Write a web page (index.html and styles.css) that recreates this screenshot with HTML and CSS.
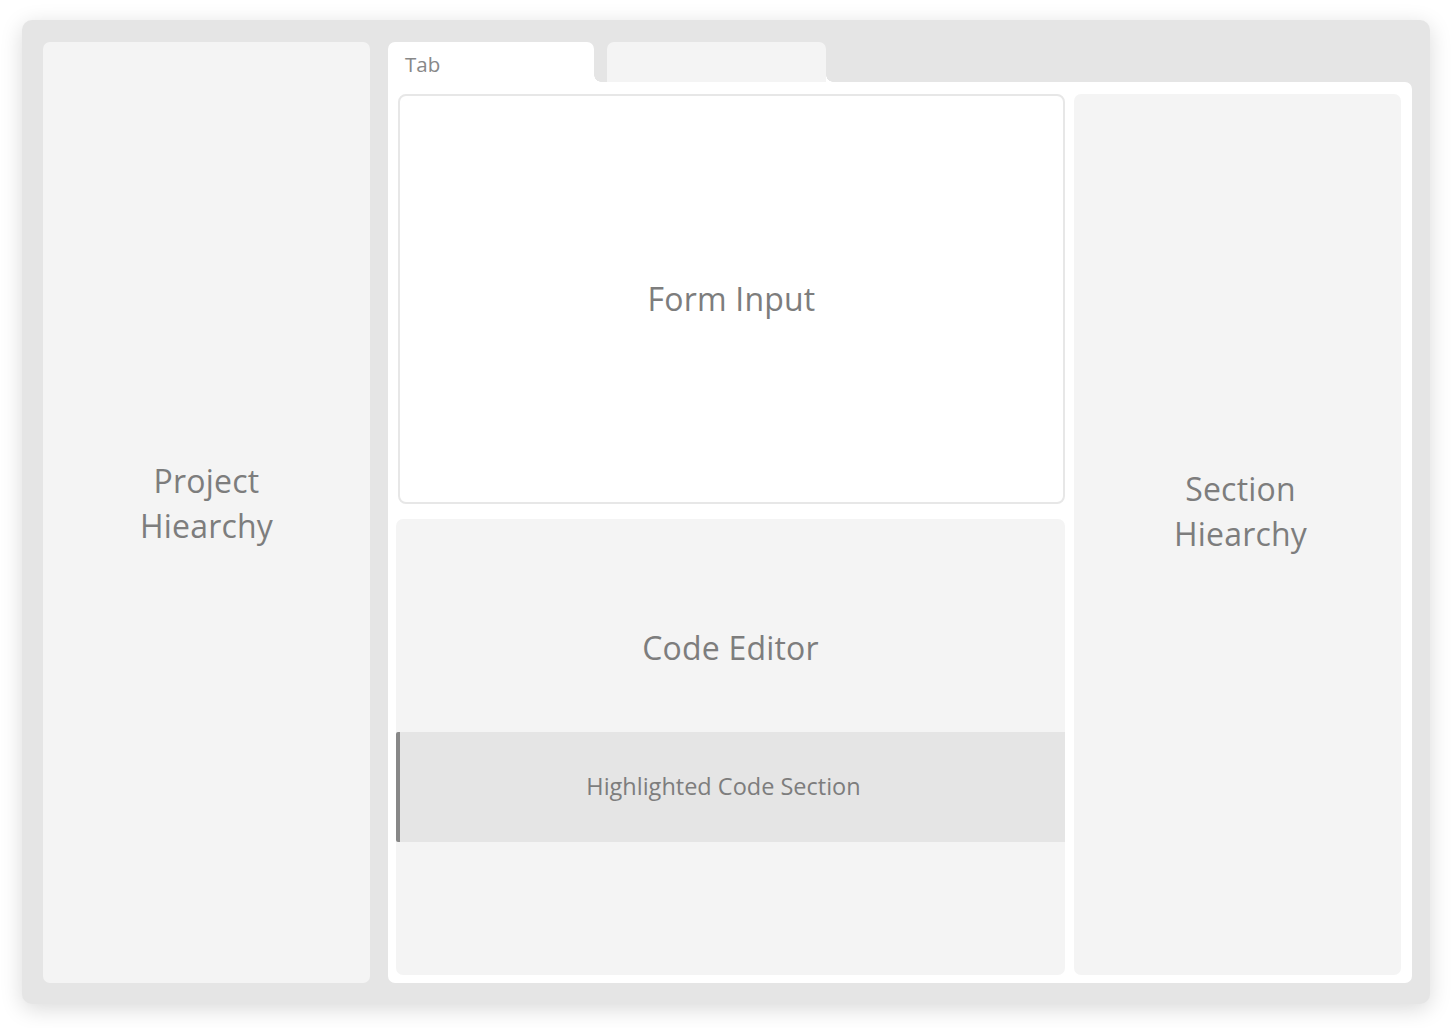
FILE: index.html
```html
<!DOCTYPE html>
<html lang="en">
<head>
<meta charset="utf-8">
<title>Editor layout</title>
<link rel="stylesheet" href="styles.css">
</head>
<body>
  <div class="frame">
    <aside class="panel project">
      <div class="label big">Project<br>Hiearchy</div>
    </aside>
    <div class="workspace">
      <div class="tabs">
        <div class="tab active">Tab</div>
        <div class="tab inactive"></div>
      </div>
      <div class="main">
        <div class="center-col">
          <div class="form-input">
            <div class="label big">Form Input</div>
          </div>
          <div class="code-editor">
            <div class="label big code-title">Code Editor</div>
            <div class="highlight">
              <div class="label small">Highlighted Code Section</div>
            </div>
          </div>
        </div>
        <div class="panel section">
          <div class="label big">Section<br>Hiearchy</div>
        </div>
      </div>
    </div>
  </div>
</body>
</html>
```
FILE: styles.css
```css
html, body {
  margin: 0;
  padding: 0;
  background: #ffffff;
}

body {
  padding: 20px 22px 24px 22px;
  font-family: "Open Sans", "Noto Sans", sans-serif;
  color: #7d7d7d;
}

.frame {
  width: 1408px;
  height: 984px;
  box-sizing: border-box;
  background: #e5e5e5;
  border-radius: 10px;
  box-shadow: 0 5px 22px rgba(0, 0, 0, 0.15);
  padding: 22px 18px 21px 21px;
  display: grid;
  grid-template-columns: 327px 1fr;
  column-gap: 18px;
}

.panel {
  background: #f4f4f4;
  border-radius: 7px;
  display: flex;
  align-items: center;
  justify-content: center;
  text-align: center;
}

.project {
  padding-bottom: 20px;
}

.label.big {
  font-size: 32px;
  line-height: 45px;
  letter-spacing: 0.2px;
}

.label.small {
  font-size: 23.5px;
  line-height: 30px;
}

.workspace {
  display: flex;
  flex-direction: column;
  min-height: 0;
}

.tabs {
  height: 40px;
  display: flex;
  gap: 13px;
  flex-shrink: 0;
}

.tab {
  position: relative;
  height: 40px;
  box-sizing: border-box;
  border-radius: 7px 7px 0 0;
}

.tab::after {
  content: "";
  position: absolute;
  right: -7px;
  bottom: 0;
  width: 7px;
  height: 7px;
  background: radial-gradient(circle at 100% 0, transparent 6.5px, #ffffff 7px);
}

.tab.active {
  width: 206px;
  background: #ffffff;
  padding: 8px 0 0 17px;
  font-size: 20.5px;
  line-height: 28px;
  color: #888888;
}

.tab.inactive {
  width: 219px;
  background: #f4f4f4;
}

.main {
  flex: 1;
  background: #ffffff;
  border-radius: 0 7px 7px 7px;
  padding: 12px 11px 8px 8px;
  display: flex;
  gap: 9px;
  min-height: 0;
}

.center-col {
  width: 669px;
  display: flex;
  flex-direction: column;
  gap: 15px;
}

.form-input {
  height: 410px;
  box-sizing: border-box;
  margin-left: 2px;
  border: 2px solid #e7e7e7;
  border-radius: 8px;
  display: flex;
  align-items: center;
  justify-content: center;
  padding-bottom: 2px;
}

.code-editor {
  flex: 1;
  background: #f4f4f4;
  border-radius: 7px;
  display: flex;
  flex-direction: column;
}

.code-title {
  text-align: center;
  margin-top: 106px;
  margin-bottom: 62px;
}

.highlight {
  height: 110px;
  background: #e5e5e5;
  border-left: 4px solid #888888;
  border-radius: 2px 0 0 2px;
  display: flex;
  align-items: center;
  justify-content: center;
  padding-right: 18px;
  padding-bottom: 2px;
  box-sizing: border-box;
}

.section {
  flex: 1;
  padding-bottom: 48px;
  padding-left: 6px;
}
```
